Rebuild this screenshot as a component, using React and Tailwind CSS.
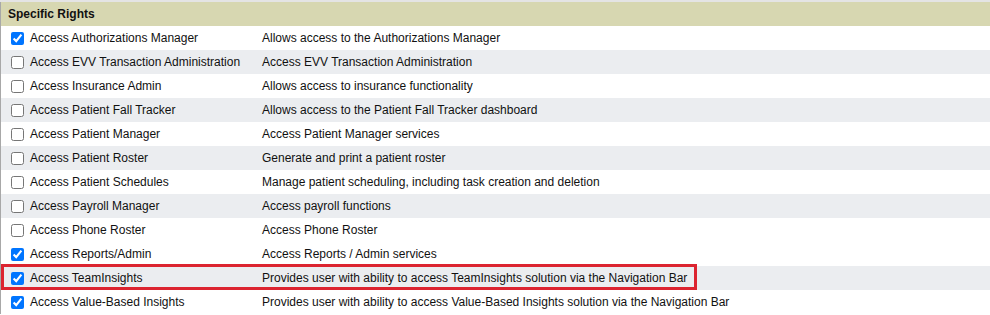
const rights = [
  { name: 'Access Authorizations Manager', desc: 'Allows access to the Authorizations Manager', on: true, shade: false },
  { name: 'Access EVV Transaction Administration', desc: 'Access EVV Transaction Administration', on: false, shade: true },
  { name: 'Access Insurance Admin', desc: 'Allows access to insurance functionality', on: false, shade: false },
  { name: 'Access Patient Fall Tracker', desc: 'Allows access to the Patient Fall Tracker dashboard', on: false, shade: true },
  { name: 'Access Patient Manager', desc: 'Access Patient Manager services', on: false, shade: false },
  { name: 'Access Patient Roster', desc: 'Generate and print a patient roster', on: false, shade: true },
  { name: 'Access Patient Schedules', desc: 'Manage patient scheduling, including task creation and deletion', on: false, shade: false },
  { name: 'Access Payroll Manager', desc: 'Access payroll functions', on: false, shade: true },
  { name: 'Access Phone Roster', desc: 'Access Phone Roster', on: false, shade: false },
  { name: 'Access Reports/Admin', desc: 'Access Reports / Admin services', on: true, shade: false },
  { name: 'Access TeamInsights', desc: 'Provides user with ability to access TeamInsights solution via the Navigation Bar', on: true, shade: true },
  { name: 'Access Value-Based Insights', desc: 'Provides user with ability to access Value-Based Insights solution via the Navigation Bar', on: true, shade: false },
]

export default function App() {
  return (
    <div className="w-[990px] h-[315px] bg-white text-[12px] text-[#111] overflow-hidden" style={{ fontFamily: 'Arial, "Liberation Sans", sans-serif' }}>
      <div className="h-[2px] bg-[#e4e4e4]" />
      <div className="relative border-l border-[#a8a8a8]">
        <div className="h-[24px] flex items-center pl-[7px] bg-[#d7d7b1] font-bold text-[#111]">Specific Rights</div>
        {rights.map((r) => (
          <div key={r.name} className={`h-[24px] flex items-center ${r.shade ? 'bg-[#ebedf0]' : 'bg-white'}`}>
            <div className="w-[261px] flex items-center pl-[10px] gap-[6px]">
              <input type="checkbox" checked={r.on} readOnly className="w-[13px] h-[13px] accent-[#0075ff]" />
              <span>{r.name}</span>
            </div>
            <div>{r.desc}</div>
          </div>
        ))}
        {/* highlight around the TeamInsights row */}
        <div className="absolute left-[0px] top-[262px] w-[696px] h-[26px] border-[3px] border-[#dc2430] pointer-events-none" />
      </div>
    </div>
  )
}
